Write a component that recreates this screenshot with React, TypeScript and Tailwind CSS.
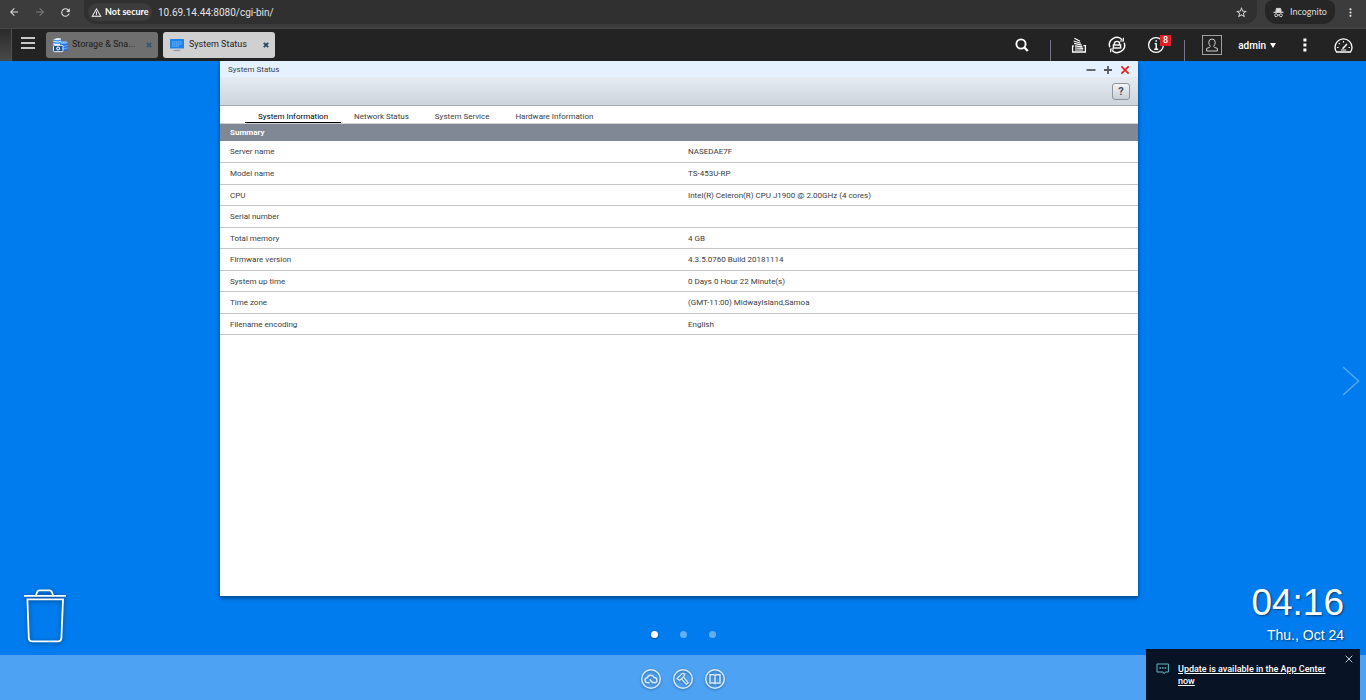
import { useState } from "react";
import {
  MdArrowBack,
  MdArrowForward,
  MdRefresh,
  MdStarBorder,
  MdMoreVert,
  MdWarningAmber,
} from "react-icons/md";

const summary = [
  { name: "Server name", value: "NASEDAE7F" },
  { name: "Model name", value: "TS-453U-RP" },
  { name: "CPU", value: "Intel(R) Celeron(R) CPU J1900 @ 2.00GHz (4 cores)" },
  { name: "Serial number", value: "" },
  { name: "Total memory", value: "4 GB" },
  { name: "Firmware version", value: "4.3.5.0760 Build 20181114" },
  { name: "System up time", value: "0 Days 0 Hour 22 Minute(s)" },
  { name: "Time zone", value: "(GMT-11:00) MidwayIsland,Samoa" },
  { name: "Filename encoding", value: "English" },
];

const tabs = [
  "System Information",
  "Network Status",
  "System Service",
  "Hardware Information",
];

const BrowserBar = () => {
  return (
    <div className="flex h-7 shrink-0 items-start bg-[#3c3c3c] pl-2 text-[#dedede] font-[Lato,sans-serif]">
      <div className="flex h-6 w-[76px] items-center justify-between pr-3">
        <button aria-label="Back">
          <MdArrowBack size={12} />
        </button>
        <button aria-label="Forward" className="text-[#7d7d7d]">
          <MdArrowForward size={12} />
        </button>
        <button aria-label="Reload">
          <MdRefresh size={13} />
        </button>
      </div>
      <div className="flex h-6 flex-1 items-center rounded-b-xl bg-[#303030] pl-1 pr-[9px]">
        <button className="flex h-[18px] w-16 items-center gap-[3px] rounded-full bg-[#3c3c3c] pl-[3px] text-[9px] font-bold text-white">
          <MdWarningAmber size={11} />
          Not secure
        </button>
        <input
          aria-label="Address"
          className="ml-[6px] flex-1 bg-transparent font-[Roboto,sans-serif] text-[10px] text-[#e3e3e3] outline-none"
          defaultValue="10.69.14.44:8080/cgi-bin/"
        />
        <button aria-label="Bookmark">
          <MdStarBorder size={13} />
        </button>
      </div>
      <button className="ml-[8px] flex h-6 w-[70px] items-center justify-center gap-[6px] rounded-b-xl rounded-t-lg bg-[#262626] text-[9px]">
        <svg width="11" height="11" viewBox="0 0 12 12" fill="none" stroke="currentColor">
          <path d="M3 5 L3.8 1.5 H8.2 L9 5 Z" fill="currentColor" />
          <path d="M0.5 5.8 H11.5" strokeWidth="1.2" />
          <circle cx="3.4" cy="9" r="1.6" />
          <circle cx="8.6" cy="9" r="1.6" />
          <path d="M5 8.8 H7" />
        </svg>
        Incognito
      </button>
      <button aria-label="Browser menu" className="flex h-6 w-[31px] items-center justify-center">
        <MdMoreVert size={13} />
      </button>
    </div>
  );
};

const StorageIcon = () => (
  <svg width="16" height="16" viewBox="0 0 16 16">
    <path d="M1.5 2.5 Q5 0 9 1.5 V8 H1.5 Z" fill="#e8f4ff" />
    <path d="M1.5 3 Q5 4.6 9 3 M1.5 5.4 Q5 7 9 5.4" stroke="#2f8df5" strokeWidth="1.3" fill="none" />
    <path d="M8 5.5 Q11.5 3.5 15.5 5.5 V13 Q12 15 8 13 Z" fill="#1f6fee" />
    <ellipse cx="11.8" cy="5.6" rx="3.7" ry="1.3" fill="#7fb8ff" />
    <path d="M8 8.5 Q12 10.3 15.5 8.5 M8 11 Q12 12.8 15.5 11" stroke="#9cc8ff" strokeWidth="0.7" fill="none" />
    <rect x="1.5" y="8.3" width="9.4" height="6.4" rx="1" fill="#15518f" stroke="#fff" strokeWidth="0.9" />
    <rect x="3" y="7" width="3" height="1.5" fill="#fff" />
    <circle cx="6.2" cy="11.5" r="1.9" fill="#fff" />
    <circle cx="6.2" cy="11.5" r="0.9" fill="#15518f" />
  </svg>
);

const MonitorIcon = () => (
  <svg width="16" height="14" viewBox="0 0 16 14">
    <rect x="1" y="1" width="14" height="9.6" rx="0.6" fill="#1c83e8" />
    <path d="M3 4 H13 M3 6 H13 M3 8 H10" stroke="#83c3ff" strokeWidth="0.9" strokeDasharray="1.6 0.4" />
    <path d="M6.3 10.6 H9.7 V12.2 H6.3 Z" fill="#b3bcc4" />
    <path d="M4.5 12.6 H11.5" stroke="#8e989f" strokeWidth="1" />
  </svg>
);

const CloseX = ({ className }: { className?: string }) => (
  <svg width="6" height="6" viewBox="0 0 6 6" className={className}>
    <path d="M0.8 0.8 L5.2 5.2 M5.2 0.8 L0.8 5.2" stroke="currentColor" strokeWidth="1.8" />
  </svg>
);

const TopBar = () => {
  return (
    <header className="flex h-[33px] shrink-0 border-t border-[#484848] bg-[#232323] text-white">
      <div className="w-3 border-r border-[#505050] bg-linear-to-b from-[#2b2b2b] to-[#4a4a4a]" />
      <button aria-label="Main menu" className="ml-[9px] mt-[8px] self-start">
        <svg width="14" height="12" viewBox="0 0 14 12">
          <path d="M0 1 H14 M0 6 H14 M0 11 H14" stroke="#fff" strokeWidth="1.6" />
        </svg>
      </button>

      {/* open apps */}
      <div className="ml-[11px] flex items-center gap-[5px] text-[9px] text-[#1c1c1c]">
        <div className="flex h-[26px] w-[112px] items-center rounded-[3px] bg-[#6f6f6f] pl-[6px] pr-[6px]">
          <StorageIcon />
          <button className="ml-1 flex-1 text-left">Storage &amp; Sna...</button>
          <button aria-label="Close Storage" className="text-[#34566f]">
            <CloseX />
          </button>
        </div>
        <div className="flex h-[26px] w-[112px] items-center rounded-[3px] bg-[#d0d0d0] pl-[6px] pr-[6px]">
          <MonitorIcon />
          <button className="ml-1 flex-1 text-left">System Status</button>
          <button aria-label="Close System Status" className="text-[#1f4868]">
            <CloseX />
          </button>
        </div>
      </div>

      <div className="ml-auto flex items-center">
        <button aria-label="Search">
          <svg width="14" height="14" viewBox="0 0 14 14" fill="none" stroke="#fff">
            <circle cx="6" cy="6" r="4.6" strokeWidth="1.9" />
            <path d="M9.2 9.2 L12.8 13" strokeWidth="2.3" />
          </svg>
        </button>
        <span className="ml-[21px] h-[21px] w-px self-end bg-[#77778a]" />
        <button aria-label="Background tasks" className="ml-[20px]">
          <svg width="16" height="16" viewBox="0 0 16 16" fill="none" stroke="#fff">
            <path d="M2.8 9 H1.6 V15 H14.4 V8.6 H12.4" strokeWidth="1.3" />
            <path d="M4 13 H12.2 M4 11 L12.2 11.4 M3.8 8.8 L11.4 9.8 M3.2 6.4 L10.8 8.2 M2.6 4 L9.8 6.2 M3.4 1.2 L9 4.2" strokeWidth="1.2" />
          </svg>
        </button>
        <button aria-label="External devices" className="ml-[21px]">
          <svg width="18" height="18" viewBox="0 0 18 18" fill="none" stroke="#fff">
            <path d="M1.8 11.2 A7.4 7.4 0 0 1 14.2 3.8 M16.2 6.8 A7.4 7.4 0 0 1 3.8 14.2" strokeWidth="1.4" />
            <path d="M15.4 1.8 V5 H12 M2.6 16.2 V13 H6" strokeWidth="1.1" />
            <path d="M6.4 9 V7.6 Q6.4 5.4 9 5.4 Q11.6 5.4 11.6 7.6 V9" strokeWidth="1.4" />
            <rect x="5.4" y="9" width="7.2" height="3" strokeWidth="1.4" />
          </svg>
        </button>
        <button aria-label="Event notifications" className="relative ml-[21px]">
          <svg width="18" height="18" viewBox="0 0 18 18" fill="none" stroke="#fff">
            <circle cx="9" cy="9" r="7.4" strokeWidth="1.3" />
            <path d="M7.6 7.6 H9.2 V13 M7.2 13.2 H11.2" strokeWidth="1.4" />
            <path d="M8.4 5 H10" strokeWidth="1.6" />
          </svg>
          <span className="absolute -top-px left-[13px] flex h-[11px] w-[11px] items-center justify-center bg-[#e02027] text-[9px] font-medium leading-none">
            8
          </span>
        </button>
        <span className="ml-[19px] h-[21px] w-px self-end bg-[#77778a]" />
        <button aria-label="Account" className="ml-[17px] border border-[#a0a0a0] p-px">
          <svg width="16" height="16" viewBox="0 0 16 16" fill="none" stroke="#d0d0d0">
            <path d="M6.4 9.4 Q4.8 7.8 4.8 5.2 Q4.8 2 8 2 Q11.2 2 11.2 5.2 Q11.2 7.8 9.6 9.4 Q10 10.6 13.4 11.4 V14 H2.6 V11.4 Q6 10.6 6.4 9.4 Z" />
          </svg>
        </button>
        <button className="ml-[16px] flex items-center gap-[4px] text-[10px] font-medium">
          admin
          <svg width="6" height="5" viewBox="0 0 6 5">
            <path d="M0 0 H6 L3 5 Z" fill="#fff" />
          </svg>
        </button>
        <button aria-label="More" className="ml-[27px]">
          <svg width="4" height="14" viewBox="0 0 4 14" fill="#fff">
            <path d="M0.4 0.6 H3.4 V3.6 H0.4 Z M0.4 5.6 H3.4 V8.6 H0.4 Z M0.4 10.6 H3.4 V13.6 H0.4 Z" />
          </svg>
        </button>
        <button aria-label="Dashboard" className="ml-[27px] mr-[13px]">
          <svg width="19" height="15" viewBox="0 0 19 15" fill="none" stroke="#fff">
            <path d="M2.6 14 Q1 12 1 9.4 A8.4 8.4 0 0 1 18 9.4 Q18 12 16.4 14 Z" strokeWidth="1.3" />
            <path d="M8.6 10.8 L13 6" strokeWidth="1.5" />
            <path d="M3 9.5 H4.6 M14.6 9.5 H16 M4.8 5.2 L5.8 6.2 M9.5 3 V4.4" strokeWidth="1.1" />
            <path d="M6.8 12 H12.2" strokeWidth="1" />
          </svg>
        </button>
      </div>
    </header>
  );
};

const StatusWindow = () => {
  const [active, setActive] = useState<string>("System Information");

  return (
    <section className="ml-[220px] mr-[228px] flex flex-1 flex-col bg-white text-[8px] text-[#404040] shadow-[0_2px_4px_rgba(0,0,0,0.45)]">
      <div className="flex h-4 items-center bg-[#e5f1fe] px-[8px] pt-px">
        <h1 className="flex-1">System Status</h1>
        <div className="flex items-center gap-[7px] text-[#55595f]">
          <button aria-label="Minimize">
            <svg width="10" height="10" viewBox="0 0 10 10">
              <path d="M0.5 5 H9.5" stroke="currentColor" strokeWidth="1.8" />
            </svg>
          </button>
          <button aria-label="Maximize">
            <svg width="10" height="10" viewBox="0 0 10 10">
              <path d="M1 5 H9 M5 1 V9" stroke="currentColor" strokeWidth="1.8" />
            </svg>
          </button>
          <button aria-label="Close" className="text-[#f01818]">
            <svg width="10" height="10" viewBox="0 0 10 10">
              <path d="M1.4 1.4 L8.6 8.6 M8.6 1.4 L1.4 8.6" stroke="currentColor" strokeWidth="1.6" />
            </svg>
          </button>
        </div>
      </div>
      <div className="flex h-[29px] items-center justify-end border-b border-[#a3a7ac] bg-linear-to-b from-[#e5ebf1] to-[#cdd4dc] pr-[8px]">
        <button
          aria-label="Help"
          className="h-[17px] w-[18px] rounded-[3px] border border-[#8f959c] bg-linear-to-b from-[#f2f4f6] to-[#c9cfd6] text-[11px] font-bold leading-none text-[#4b4f55]"
        >
          ?
        </button>
      </div>

      {/* tabs */}
      <div className="flex h-[18px] items-end border-b border-[#d0d0d0] pl-[25px]">
        {tabs.map((tab) => (
          <button
            key={tab}
            onClick={() => setActive(tab)}
            className={
              tab === active
                ? "h-4 border-b border-black px-[13px] pt-[4px] leading-[10px] text-black"
                : "h-4 border-b border-transparent px-[13px] pt-[4px] leading-[10px]"
            }
          >
            {tab}
          </button>
        ))}
      </div>

      <table className="w-full table-fixed border-b border-[#9a9a9a] text-left">
        <thead>
          <tr className="h-[17px] bg-[#808795] text-white">
            <th colSpan={2} className="pl-[10px] font-bold leading-[10px]">
              Summary
            </th>
          </tr>
        </thead>
        <tbody>
          {summary.map((row) => (
            <tr
              key={row.name}
              className="border-b border-[#c6c6c6] odd:h-[21px] even:h-[22px]"
            >
              <td className="pl-[10px] pt-[2px] leading-[10px]">{row.name}</td>
              <td className="pl-[9px] pt-[2px] leading-[10px]">{row.value}</td>
            </tr>
          ))}
        </tbody>
      </table>
    </section>
  );
};

const Dock = () => {
  return (
    <footer className="flex h-[45px] shrink-0 items-center justify-center gap-[10px] bg-[#4da2f4] pt-[2px]">
      <button aria-label="myQNAPcloud" className="drop-shadow-[0_1px_1px_rgba(0,0,0,0.35)]">
        <svg width="22" height="22" viewBox="0 0 22 22" fill="none" stroke="#d6e8fb">
          <circle cx="11" cy="11" r="9.3" strokeWidth="1.5" />
          <path d="M9.8 14.8 H7.8 Q5 14.6 5 12.2 Q5 10 7.4 9.8 Q8 7.2 10.8 7.2 Q13.2 7.2 14 9.4 Q17 9.6 17 12.2 Q17 14.8 14.2 14.8 Q12.4 14.8 11.2 13.2 L9.8 11.4" strokeWidth="1.5" />
        </svg>
      </button>
      <button aria-label="Utility" className="drop-shadow-[0_1px_1px_rgba(0,0,0,0.35)]">
        <svg width="22" height="22" viewBox="0 0 22 22" fill="none" stroke="#d6e8fb">
          <circle cx="11" cy="11" r="9.3" strokeWidth="1.5" />
          <path d="M5 10.6 L10.4 5.4 L12.8 6 L11.8 8.6 L7.6 12.4 Z" strokeWidth="1.3" />
          <path d="M9.6 11 L14.4 16.4 L16.2 14.8 L11.6 9.2" strokeWidth="1.3" />
        </svg>
      </button>
      <button aria-label="Feedback" className="drop-shadow-[0_1px_1px_rgba(0,0,0,0.35)]">
        <svg width="22" height="22" viewBox="0 0 22 22" fill="none" stroke="#d6e8fb">
          <circle cx="11" cy="11" r="9.3" strokeWidth="1.5" />
          <path d="M6 6.8 H9.8 L11 7.6 L12.2 6.8 H16 V15 H12.2 L11 15.6 L9.8 15 H6 Z M11 7.6 V15.4" strokeWidth="1.5" />
        </svg>
      </button>
    </footer>
  );
};

const Toast = () => {
  return (
    <div className="absolute bottom-0 right-[6px] flex h-[51px] w-[214px] items-start bg-[#081326] pl-[10px] text-white">
      <svg width="14" height="12" viewBox="0 0 14 12" fill="none" stroke="#5fb7bf" className="mt-[14px]">
        <path d="M1 1 H12.4 V9 H9.4 L8.2 10.8 L7 9 H1 Z" />
        <path d="M3.4 5 H5 M6 5 H7.6 M8.6 5 H10.2" strokeWidth="1.4" />
      </svg>
      <a href="#" className="ml-[8px] mt-[14px] w-[150px] text-[9px] font-medium leading-[12px] underline">
        Update is available in the App Center now
      </a>
      <button aria-label="Dismiss" className="ml-auto mr-[7px] mt-[6px]">
        <svg width="8" height="8" viewBox="0 0 8 8">
          <path d="M0.7 0.7 L7.3 7.3 M7.3 0.7 L0.7 7.3" stroke="#c9ced6" strokeWidth="1" />
        </svg>
      </button>
    </div>
  );
};

const App = () => {
  return (
    <div className="relative flex min-h-screen flex-col bg-[#007cee] font-[Roboto,sans-serif]">
      <BrowserBar />
      <TopBar />
      <main className="relative flex flex-1 flex-col">
        <StatusWindow />
        <div className="flex h-[59px] items-center justify-center gap-[22px] pl-px pt-[18px]">
          <button aria-label="Desktop 1" className="h-[7px] w-[7px] rounded-full bg-white shadow-[0_1px_2px_rgba(0,0,0,0.4)]" />
          <button aria-label="Desktop 2" className="h-[7px] w-[7px] rounded-full bg-[#62aff6]" />
          <button aria-label="Desktop 3" className="h-[7px] w-[7px] rounded-full bg-[#62aff6]" />
        </div>

        {/* desktop items */}
        <button aria-label="Recycle bin" className="absolute bottom-[11px] left-[23px]">
          <svg width="44" height="56" viewBox="0 0 44 56" fill="none" stroke="#fff" strokeWidth="1.8" className="drop-shadow-[0_1px_2px_rgba(0,0,0,0.5)]">
            <path d="M1 7.8 H43" />
            <path d="M13 7 L14.4 3.6 Q15 2.4 16.4 2.4 H26.6 Q28 2.4 28.6 3.6 L30 7" />
            <path d="M4.4 11.4 H40 L38.4 50 Q38.2 53.4 35 53.4 H9.2 Q6 53.4 5.8 50 Z" />
          </svg>
        </button>
        <button aria-label="Next desktop" className="absolute right-[6px] top-[305px]">
          <svg width="18" height="30" viewBox="0 0 18 30" fill="none">
            <path d="M1 1 L16.6 15 L1 29" stroke="#58aaf6" strokeWidth="1.4" />
          </svg>
        </button>
        <div className="absolute bottom-[10px] right-[22px] text-right font-['Liberation_Sans',sans-serif] text-white text-shadow-[1px_1px_2px_rgba(0,0,0,0.5)]">
          <div className="text-[37px] leading-[45px]">04:16</div>
          <div className="text-[14px] leading-[20px]">Thu., Oct 24</div>
        </div>
      </main>
      <Dock />
      <Toast />
    </div>
  );
};

export default App;
